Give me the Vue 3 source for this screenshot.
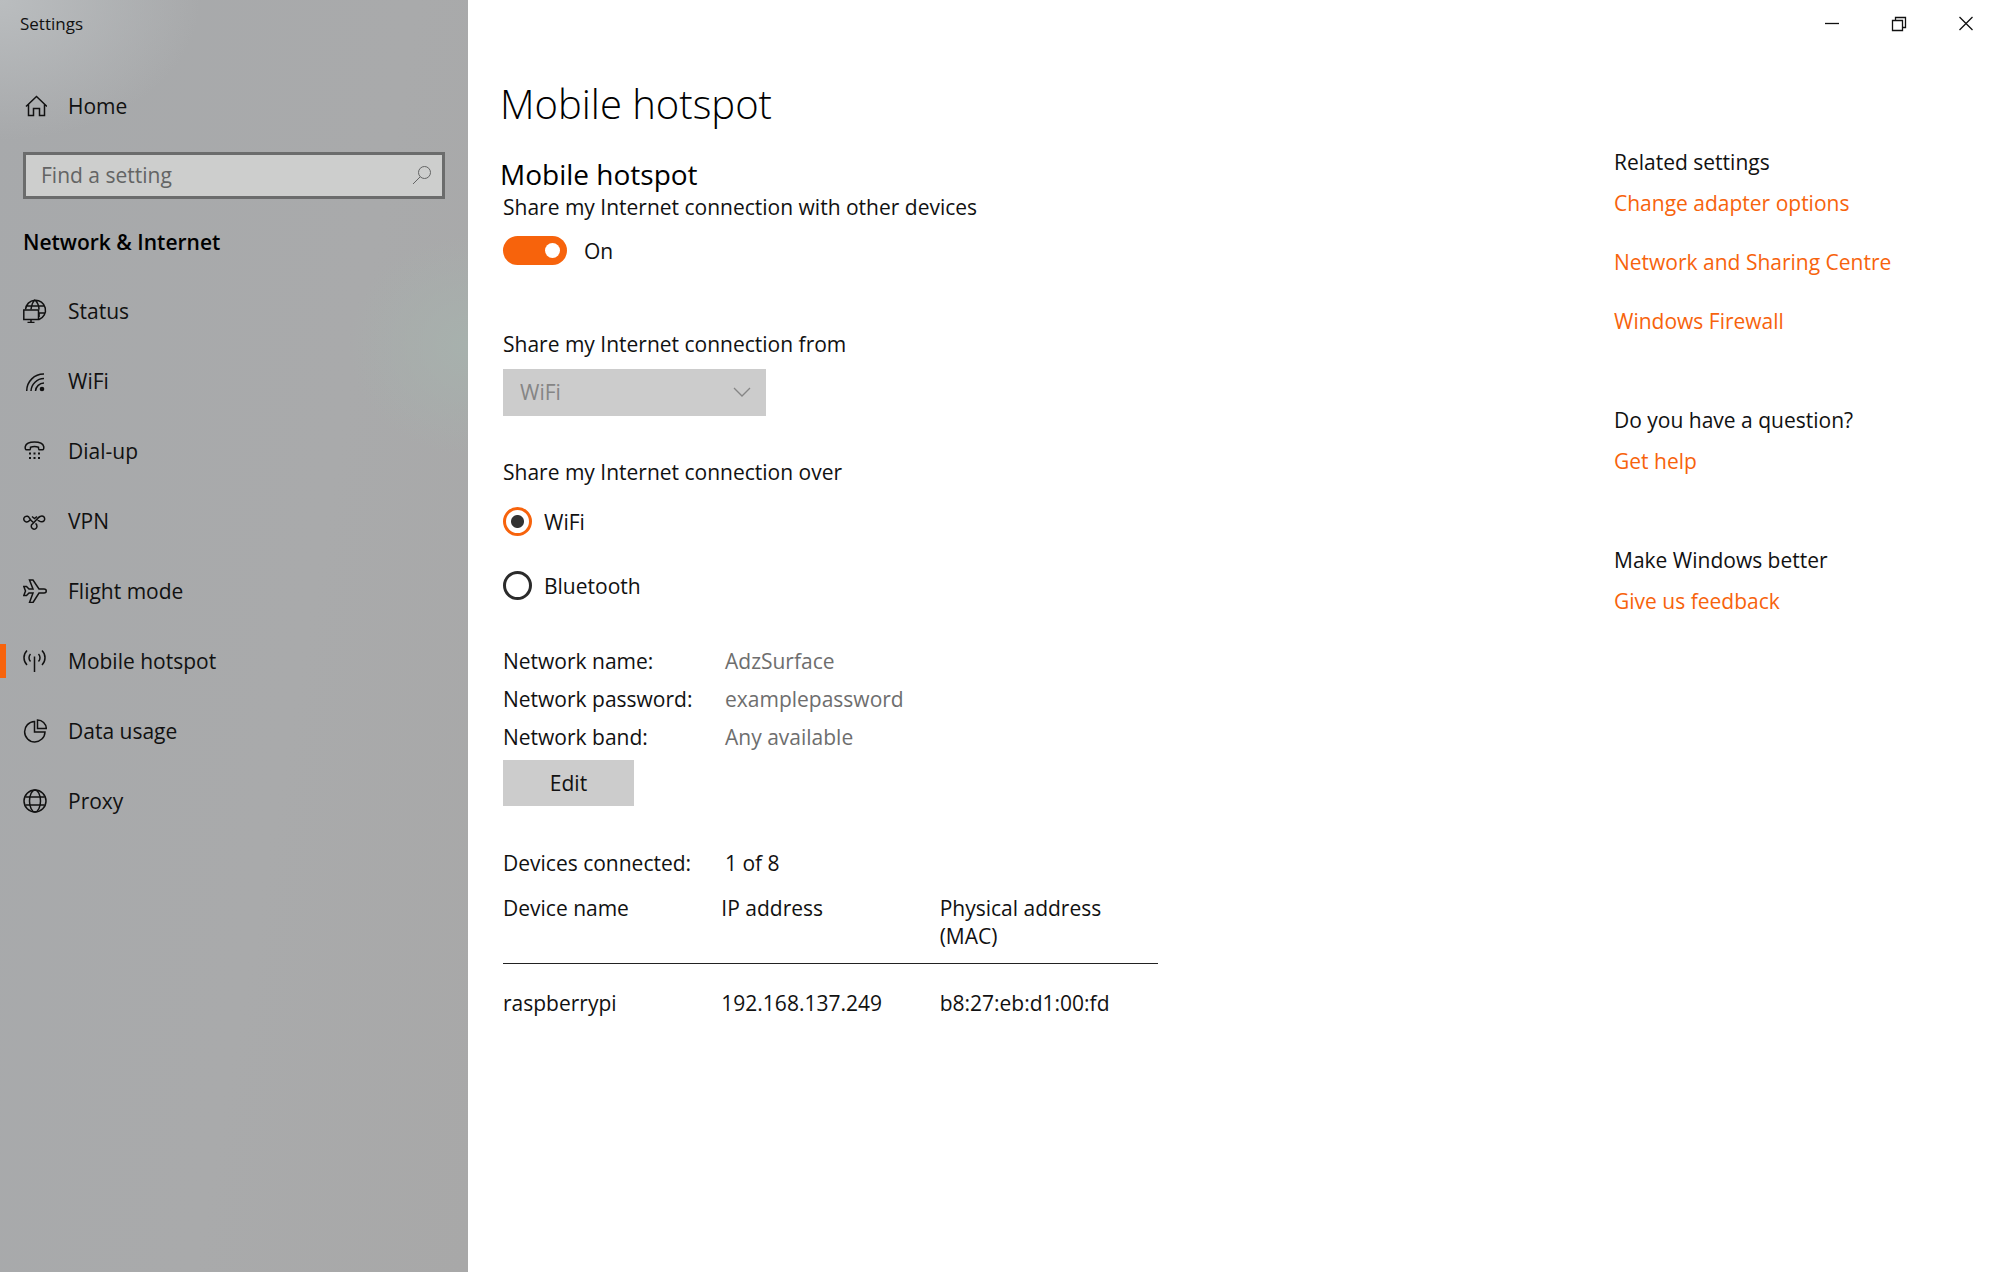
<script setup>
import { ref } from 'vue'

const search = ref('')
const sharing = ref(true)
const source = ref('WiFi')
const medium = ref('WiFi')

const navItems = [
  { id: 'status', label: 'Status' },
  { id: 'wifi', label: 'WiFi' },
  { id: 'dialup', label: 'Dial-up' },
  { id: 'vpn', label: 'VPN' },
  { id: 'flight', label: 'Flight mode' },
  { id: 'hotspot', label: 'Mobile hotspot' },
  { id: 'data', label: 'Data usage' },
  { id: 'proxy', label: 'Proxy' },
]
const current = 'hotspot'

const network = [
  { label: 'Network name:', value: 'AdzSurface' },
  { label: 'Network password:', value: 'examplepassword' },
  { label: 'Network band:', value: 'Any available' },
]

const devices = [{ name: 'raspberrypi', ip: '192.168.137.249', mac: 'b8:27:eb:d1:00:fd' }]

const related = [
  { title: 'Related settings', links: ['Change adapter options', 'Network and Sharing Centre', 'Windows Firewall'] },
  { title: 'Do you have a question?', links: ['Get help'] },
  { title: 'Make Windows better', links: ['Give us feedback'] },
]
</script>

<template>
  <div class="window">
    <aside class="sidebar">
      <div class="app-title">Settings</div>
      <a class="home" href="#home">
        <svg class="icon" viewBox="0 0 24 24" aria-hidden="true">
          <path d="M3 12.5 13.500 2.500 24 12.500M5.500 10.500V21.500H10.500V14.500H16.500V21.500H21.500V10.500" />
        </svg>
        <span>Home</span>
      </a>
      <div class="search">
        <input v-model="search" type="text" placeholder="Find a setting" aria-label="Find a setting" />
        <svg class="search-icon" viewBox="0 0 20 20" aria-hidden="true">
          <circle cx="12.500" cy="7.500" r="6" />
          <path d="M8.200 11.800 1 19" />
        </svg>
      </div>
      <h2 class="category">Network &amp; Internet</h2>
      <nav>
        <a
          v-for="item in navItems"
          :key="item.id"
          class="nav-item"
          :class="{ active: item.id === current }"
          :href="'#' + item.id"
        >
          <svg class="icon" viewBox="0 0 24 24" aria-hidden="true">
            <g v-if="item.id === 'status'">
              <path d="M2.500 10.500A10 10 0 1 1 16 20.500M3.500 7H21M16 14H22M8 10.500C8.500 6 10 2.500 12 1M12 1C14.500 3.500 16 7 16 10.500M16 14V18" />
              <path d="M.8 11H15.500V20.500H.8ZM8 20.500V23.500M4.500 23.500H11.500" />
            </g>
            <g v-else-if="item.id === 'wifi'">
              <path d="M3.700 22A17 17 0 0 1 21 5M8 22A13 13 0 0 1 21 9.600M12.500 22A8.600 8.600 0 0 1 21 14" />
              <circle class="solid" cx="19" cy="20" r="2.300" />
            </g>
            <g v-else-if="item.id === 'dialup'">
              <path d="M3.500 10.800C2.300 10.800 2 9 2.300 7.500 3 4.500 7 3 11.500 3S20 4.500 20.700 7.500C21 9 20.700 10.800 19.500 10.800H16.500C15.500 10.800 15.500 10 15.500 8.200 13.500 7.500 9.500 7.500 7.500 8.200 7.500 10 7.500 10.800 6.500 10.800Z" />
              <path class="dots" d="M6 14.500H8M10.500 14.500H12.500M15 14.500H17M6 19H8M10.500 19H12.500M15 19H17" />
            </g>
            <g v-else-if="item.id === 'vpn'">
              <path d="M10.500 13.500C9 12.500 7.500 11 6.300 8.800A2.900 2.900 0 1 0 5.500 12.300L7 11" />
              <path d="M14.500 11.500C15.500 10.800 16.300 12.800 18.800 12.800A2.900 2.900 0 1 0 17.500 7.300C14.500 8.500 13 12 9.500 14.800A2.900 2.900 0 1 0 14 17.500C14 16 13.500 15 12.500 14.300" />
              <path d="M9 7.500 11.500 9.500 14 7.500" />
            </g>
            <g v-else-if="item.id === 'flight'">
              <path d="M.8 7.500H3.500L6 10H10L6.500 1H10L16 10H21C24 10 24 14 21 14H16L10 23.500H6.500L10 14H6L3.500 16.500H.8L2.500 12Z" />
            </g>
            <g v-else-if="item.id === 'hotspot'">
              <path d="M11.500 7.500V23M7.500 5C5.500 7 5.500 10.500 7.500 12.500M15.500 5C17.500 7 17.500 10.500 15.500 12.500M4 1.500C0 5.500 0 12 4 16M19 1.500C23 5.500 23 12 19 16" />
            </g>
            <g v-else-if="item.id === 'data'">
              <path d="M11.500 2.500A10.200 10.200 0 1 0 22 13H11.500ZM14.500 1V9.500H23.300A8.800 8.800 0 0 0 14.500 1Z" />
            </g>
            <g v-else>
              <circle cx="12" cy="12" r="11" />
              <ellipse cx="12" cy="12" rx="5.500" ry="11" />
              <path d="M2.300 8H21.700M2.300 16H21.700" />
            </g>
          </svg>
          <span>{{ item.label }}</span>
        </a>
      </nav>
    </aside>

    <div class="page">
      <div class="controls">
        <button type="button" aria-label="Minimise">
          <svg viewBox="0 0 16 16" aria-hidden="true"><path d="M1 7.500H15" /></svg>
        </button>
        <button type="button" aria-label="Restore">
          <svg viewBox="0 0 16 16" aria-hidden="true"><path d="M1.500 4.500H11.500V14.500H1.500ZM4.500 4.500V1.500H14.500V11.500H11.500" /></svg>
        </button>
        <button type="button" aria-label="Close">
          <svg viewBox="0 0 16 16" aria-hidden="true"><path d="M1.500 1 14.500 14M14.500 1 1.500 14" /></svg>
        </button>
      </div>

      <div class="columns">
        <main>
          <h1>Mobile hotspot</h1>
          <h2 class="section-title">Mobile hotspot</h2>
          <label class="toggle-label" for="sharing">Share my Internet connection with other devices</label>
          <div class="toggle-row">
            <input id="sharing" v-model="sharing" class="toggle" type="checkbox" role="switch" />
            <span>{{ sharing ? 'On' : 'Off' }}</span>
          </div>

          <label class="field-label" for="source">Share my Internet connection from</label>
          <div class="select">
            <select id="source" v-model="source" disabled>
              <option>WiFi</option>
            </select>
            <svg class="chevron" viewBox="0 0 18 10" aria-hidden="true"><path d="M1 1 9 9 17 1" /></svg>
          </div>

          <fieldset>
            <legend>Share my Internet connection over</legend>
            <label v-for="option in ['WiFi', 'Bluetooth']" :key="option" class="radio">
              <input v-model="medium" type="radio" name="medium" :value="option" />
              <span>{{ option }}</span>
            </label>
          </fieldset>

          <dl class="network">
            <div v-for="row in network" :key="row.label" class="pair">
              <dt>{{ row.label }}</dt>
              <dd class="muted">{{ row.value }}</dd>
            </div>
          </dl>
          <button type="button" class="edit">Edit</button>

          <dl class="connected">
            <div class="pair">
              <dt>Devices connected:</dt>
              <dd>1 of 8</dd>
            </div>
          </dl>
          <table>
            <thead>
              <tr>
                <th scope="col">Device name</th>
                <th scope="col">IP address</th>
                <th scope="col">Physical address (MAC)</th>
              </tr>
            </thead>
            <tbody>
              <tr v-for="device in devices" :key="device.mac">
                <td>{{ device.name }}</td>
                <td>{{ device.ip }}</td>
                <td>{{ device.mac }}</td>
              </tr>
            </tbody>
          </table>
        </main>

        <aside class="related">
          <section v-for="group in related" :key="group.title">
            <h3>{{ group.title }}</h3>
            <ul>
              <li v-for="link in group.links" :key="link"><a href="#related">{{ link }}</a></li>
            </ul>
          </section>
        </aside>
      </div>
    </div>
  </div>
</template>

<style>
body {
  margin: 0;
  background: #fff;
}
</style>

<style scoped>
.window {
  --accent: #f7630c;
  display: grid;
  grid-template-columns: 468px minmax(0, 1fr);
  min-height: 100vh;
  color: #111;
  font: 400 21px/28px "Open Sans", "Noto Sans", sans-serif;
}

h1, h2, h3, dl, dd, ul {
  margin: 0;
  padding: 0;
}

a {
  color: inherit;
  text-decoration: none;
}

button, input, select {
  margin: 0;
  font: inherit;
  color: inherit;
}

svg {
  fill: none;
  stroke: currentColor;
}

/* Sidebar */
.sidebar {
  padding-top: 12px;
  background:
    radial-gradient(ellipse 200px 140px at 0 0, #babdbf 0, rgba(186, 189, 191, 0) 100%),
    radial-gradient(ellipse 120px 110px at 100% 345px, #a7b1ad 0, rgba(167, 177, 173, 0) 100%),
    linear-gradient(100deg, #a7a9ab 0, #a9aaab 60%, #a8a8a8 100%);
}

.app-title {
  padding-left: 20px;
  font-size: 17px;
  line-height: 24px;
}

.home, .nav-item {
  display: flex;
  align-items: center;
  gap: 21px;
  padding-left: 23px;
}

.home {
  height: 46px;
  margin-top: 47px;
}

.icon {
  width: 24px;
  height: 24px;
  stroke-width: 1.5;
}

.solid {
  fill: currentColor;
  stroke: none;
}

.dots {
  stroke-width: 2;
}

.search {
  position: relative;
  margin: 23px 23px 0;
}

.search input {
  display: block;
  box-sizing: border-box;
  width: 100%;
  height: 47px;
  padding: 0 48px 2px 15px;
  border: 3px solid #6b6c6c;
  border-radius: 0;
  background: #cdcecd;
  outline: none;
}

.search input::placeholder {
  color: #636464;
  opacity: 1;
}

.search-icon {
  position: absolute;
  top: 13px;
  right: 13px;
  width: 20px;
  height: 20px;
  color: #636464;
}

.category {
  margin: 29px 0 20px 23px;
  font-size: 21px;
  font-weight: 600;
  line-height: 28px;
  color: #000;
}

.nav-item {
  height: 70px;
  position: relative;
}

.active::before {
  content: "";
  position: absolute;
  left: 0;
  width: 6px;
  height: 34px;
  background: var(--accent);
}

/* Window controls */
.controls {
  display: flex;
  justify-content: flex-end;
  height: 47px;
}

.controls button {
  display: flex;
  align-items: center;
  justify-content: center;
  width: 67px;
  padding: 0;
  border: 0;
  background: none;
}

.controls svg {
  width: 16px;
  height: 16px;
  stroke-width: 1.3;
}

/* Content */
.columns {
  display: flex;
  justify-content: space-between;
  padding-left: 35px;
}

main {
  width: 655px;
  padding: 30px 0 40px;
}

h1, .section-title {
  margin-left: -3px;
  color: #000;
}

h1 {
  font-size: 40px;
  font-weight: 300;
  line-height: 54px;
}

.section-title {
  margin-top: 25px;
  font-size: 28px;
  font-weight: 400;
  line-height: 36px;
}

.toggle-label {
  display: block;
  margin-top: 1px;
}

.toggle-row {
  display: flex;
  align-items: center;
  gap: 17px;
  margin-top: 15px;
}

.toggle {
  position: relative;
  appearance: none;
  width: 64px;
  height: 29px;
  border-radius: 15px;
  background: #777;
}

.toggle:checked {
  background: var(--accent);
}

.toggle::before {
  content: "";
  position: absolute;
  top: 7px;
  left: 7px;
  width: 15px;
  height: 15px;
  border-radius: 50%;
  background: #fff;
}

.toggle:checked::before {
  left: 42px;
}

.field-label {
  display: block;
  margin-top: 65px;
}

.select {
  position: relative;
  width: 263px;
  margin-top: 11px;
}

select {
  display: block;
  appearance: none;
  width: 100%;
  height: 47px;
  padding: 0 48px 2px 17px;
  border: 0;
  border-radius: 0;
  background: #ccc;
}

select:disabled {
  color: #858585;
  opacity: 1;
}

.chevron {
  position: absolute;
  top: 18px;
  right: 15px;
  width: 18px;
  height: 10px;
  color: #858585;
  stroke-width: 1.3;
}

fieldset {
  display: flex;
  flex-direction: column;
  gap: 35px;
  margin: 42px 0 0;
  padding: 0;
  border: 0;
}

legend {
  padding: 0;
  margin-bottom: 21px;
}

.radio {
  display: flex;
  align-items: center;
  gap: 12px;
}

.radio input {
  appearance: none;
  width: 29px;
  height: 29px;
  border: 3px solid #2b2b2b;
  border-radius: 50%;
}

.radio input:checked {
  border-color: var(--accent);
  background: radial-gradient(circle, #333 6px, #fff 7px);
}

.network {
  display: grid;
  gap: 10px;
  margin-top: 47px;
}

.pair {
  display: grid;
  grid-template-columns: 222px 1fr;
}

.muted {
  color: #6e6e6e;
}

.edit {
  display: block;
  width: 131px;
  height: 46px;
  margin-top: 9px;
  padding: 0;
  border: 0;
  background: #ccc;
}

.connected {
  margin-top: 43px;
}

table {
  width: 100%;
  margin-top: 17px;
  border-collapse: collapse;
  table-layout: fixed;
}

th, td {
  padding: 0;
  text-align: left;
  vertical-align: top;
  font-weight: 400;
}

th {
  padding-bottom: 13px;
  border-bottom: 1px solid #222;
}

td {
  padding-top: 25px;
}

/* Related links */
.related {
  display: flex;
  flex-direction: column;
  gap: 71px;
  width: 385px;
  padding-top: 101px;
}

h3 {
  font-size: 21px;
  font-weight: 400;
  line-height: 28px;
}

ul {
  display: grid;
  gap: 31px;
  margin-top: 13px;
  list-style: none;
}

.related a {
  color: var(--accent);
}
</style>
